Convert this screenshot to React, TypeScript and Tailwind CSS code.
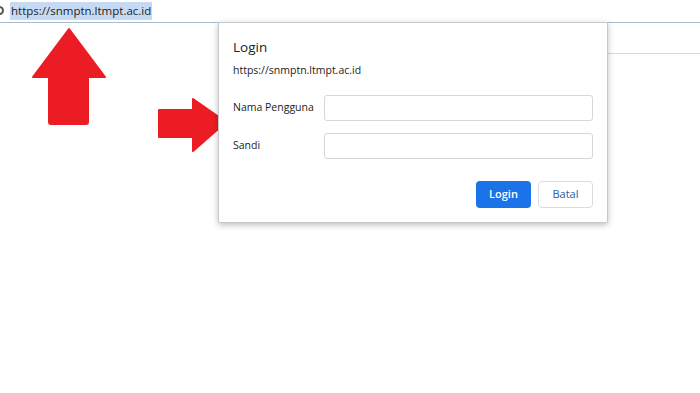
import React from "react";

const font = { fontFamily: '"Open Sans", "Noto Sans", "Liberation Sans", sans-serif' };

function UpArrow() {
  return (
    <svg className="absolute left-[32px] top-[28px]" width="74" height="97" viewBox="0 0 74 97">
      <path
        d="M37 1 L73 49 L56 49 L56 94 Q56 96 54 96 L19 96 Q17 96 17 94 L17 49 L1 49 Z"
        fill="#ec1c24"
        stroke="#ec1c24"
        strokeLinejoin="round"
        strokeWidth="2"
      />
    </svg>
  );
}

function RightArrow() {
  return (
    <svg className="absolute left-[157px] top-[98px]" width="71" height="54" viewBox="0 0 71 54">
      <path
        d="M2 12 L36 12 L36 1 L69 24 L36 53 L36 39 L2 39 Z"
        fill="#ec1c24"
        stroke="#ec1c24"
        strokeLinejoin="round"
        strokeWidth="2"
      />
    </svg>
  );
}

function Field({ label }: { label: string }) {
  return (
    <div className="flex items-center">
      <span className="w-[91px] text-[10.5px] text-[#222]">{label}</span>
      <div className="h-[26px] flex-1 rounded-[3px] border border-[#d6d6d6] bg-white" />
    </div>
  );
}

export default function App() {
  return (
    <div className="relative h-[393px] w-[700px] overflow-hidden bg-white" style={font}>
      {/* address bar */}
      <div className="flex h-[23px] items-start border-b border-[#a9bccb]">
        <div className="ml-[-5px] mt-[6px] h-[9px] w-[9px] rounded-full border-[2px] border-[#555]" />
        <span className="ml-[6px] mt-[2px] bg-[#c6dbf3] px-[1px] text-[11.5px] leading-[18px] text-[#1d1d1d]">
          https://snmptn.ltmpt.ac.id
        </span>
      </div>
      <div className="flex">
        <div className="ml-auto mt-[30px] w-[93px] border-b border-[#d8d8d8]" />
      </div>

      <UpArrow />
      <RightArrow />

      {/* login dialog */}
      <div className="absolute left-[218px] top-[22px] w-[390px] rounded-b-[2px] border border-[#c8c8c8] bg-white px-[14px] pb-[14px] pt-[14px] shadow-[0_2px_6px_rgba(0,0,0,0.25)]">
        <div className="text-[13.5px] leading-[20px] text-[#222]">Login</div>
        <div className="mt-[6px] text-[10.5px] leading-[14px] text-[#222]">https://snmptn.ltmpt.ac.id</div>
        <div className="mt-[18px] flex flex-col gap-[12px]">
          <Field label="Nama Pengguna" />
          <Field label="Sandi" />
        </div>
        <div className="mt-[22px] flex justify-end gap-[7px]">
          <button className="h-[27px] w-[55px] rounded-[4px] bg-[#1a73e8] text-[11px] font-semibold text-white">
            Login
          </button>
          <button className="h-[27px] w-[55px] rounded-[4px] border border-[#dadce0] bg-white text-[11px] text-[#2e5a9c]">
            Batal
          </button>
        </div>
      </div>
    </div>
  );
}
